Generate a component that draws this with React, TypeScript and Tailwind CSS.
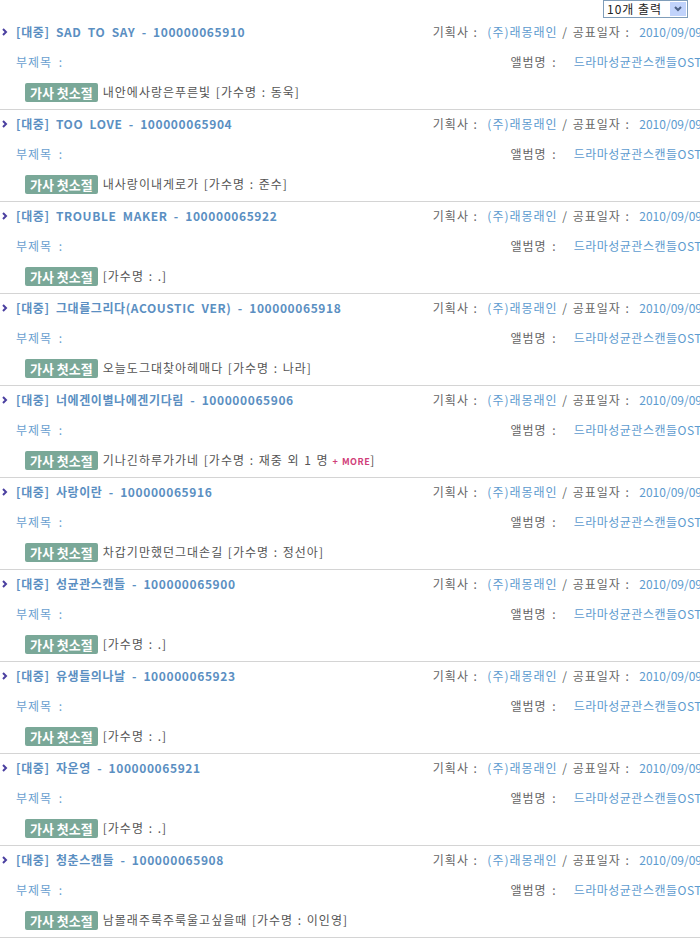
import React from "react";

type Item = { title: string; code: string; lyric: string; singer: string; more?: boolean };

const items: Item[] = [
  { title: "SAD TO SAY", code: "100000065910", lyric: "내안에사랑은푸른빛", singer: "동욱" },
  { title: "TOO LOVE", code: "100000065904", lyric: "내사랑이내게로가", singer: "준수" },
  { title: "TROUBLE MAKER", code: "100000065922", lyric: "", singer: "." },
  { title: "그대를그리다(ACOUSTIC VER)", code: "100000065918", lyric: "오늘도그대찾아헤매다", singer: "나라" },
  { title: "너에겐이별나에겐기다림", code: "100000065906", lyric: "기나긴하루가가네", singer: "재중 외 1 명", more: true },
  { title: "사랑이란", code: "100000065916", lyric: "차갑기만했던그대손길", singer: "정선아" },
  { title: "성균관스캔들", code: "100000065900", lyric: "", singer: "." },
  { title: "유생들의나날", code: "100000065923", lyric: "", singer: "." },
  { title: "자운영", code: "100000065921", lyric: "", singer: "." },
  { title: "청춘스캔들", code: "100000065908", lyric: "남몰래주룩주룩울고싶을때", singer: "이인영" },
];

const font = { fontFamily: '"Noto Sans CJK KR", "Noto Sans", sans-serif' };

function Chevron() {
  return (
    <svg width="6" height="8" viewBox="0 0 6 8" className="shrink-0">
      <path d="M1 1 L4 4 L1 7" stroke="#4a3fa0" strokeWidth="2" fill="none" />
    </svg>
  );
}

function Row({ it }: { it: Item }) {
  return (
    <div className="border-b border-[#d4d4d4] pb-[3px]">
      <div className="h-[28px] flex items-center">
        <div className="flex items-center pl-[2px] flex-1 min-w-0 whitespace-nowrap">
          <Chevron />
          <span className="ml-[8px] text-[12px] font-bold text-[#5b8fc2] tracking-[0.6px] [word-spacing:3px]">
            [대중] {it.title} - {it.code}
          </span>
        </div>
        <div className="whitespace-nowrap text-[12px] text-[#666] tracking-[1px] [word-spacing:1px]">
          기획사 :&nbsp; <span className="text-[#5d9bcf]">(주)래몽래인</span> / 공표일자 :&nbsp;&nbsp;
          <span className="text-[#5d9bcf] tracking-[0px]">2010/09/09</span>
        </div>
      </div>
      <div className="h-[32px] flex items-center">
        <div className="flex-1 pl-[16px] text-[12px] text-[#6a9fd0] whitespace-nowrap tracking-[1px] [word-spacing:3px]">
          부제목 :
        </div>
        <div className="whitespace-nowrap text-[12px] text-[#666] tracking-[1px] [word-spacing:2px]">
          앨범명 :&nbsp;&nbsp; <span className="text-[#5d9bcf] tracking-[0.5px]">드라마성균관스캔들OST</span>
        </div>
      </div>
      <div className="h-[28px] flex items-center pl-[25px] whitespace-nowrap">
        <span className="h-[19px] px-[5px] rounded-[2px] bg-[#7aa898] text-white text-[13px] font-bold leading-[19px]">
          가사 첫소절
        </span>
        <span className="ml-[5px] text-[12px] text-[#555] tracking-[1px] [word-spacing:1px]">
          {it.lyric ? it.lyric + " " : ""}[가수명 : {it.singer}
          {it.more && (
            <span className="ml-[4px] text-[9px] font-bold text-[#d0407a] tracking-[0.5px]">+ MORE</span>
          )}
          ]
        </span>
      </div>
    </div>
  );
}

export default function App() {
  return (
    <div className="w-[700px] overflow-hidden bg-white" style={font}>
      <div className="w-[702px]">
        <div className="h-[18px] flex justify-end pr-[14px]">
          <div className="h-[18px] w-[85px] border border-[#7f9db9] flex items-center bg-white">
            <span className="flex-1 pl-[3px] text-[12px] text-[#222] leading-none tracking-[1px]">10개 출력</span>
            <span className="w-[16px] h-[14px] mr-[1px] bg-[#c1d3fb] flex items-center justify-center">
              <svg width="8" height="6" viewBox="0 0 8 6">
                <path d="M1 1 L4 4 L7 1" stroke="#4d6185" strokeWidth="2" fill="none" />
              </svg>
            </span>
          </div>
        </div>
        {items.map((it) => (
          <Row key={it.code} it={it} />
        ))}
      </div>
    </div>
  );
}
